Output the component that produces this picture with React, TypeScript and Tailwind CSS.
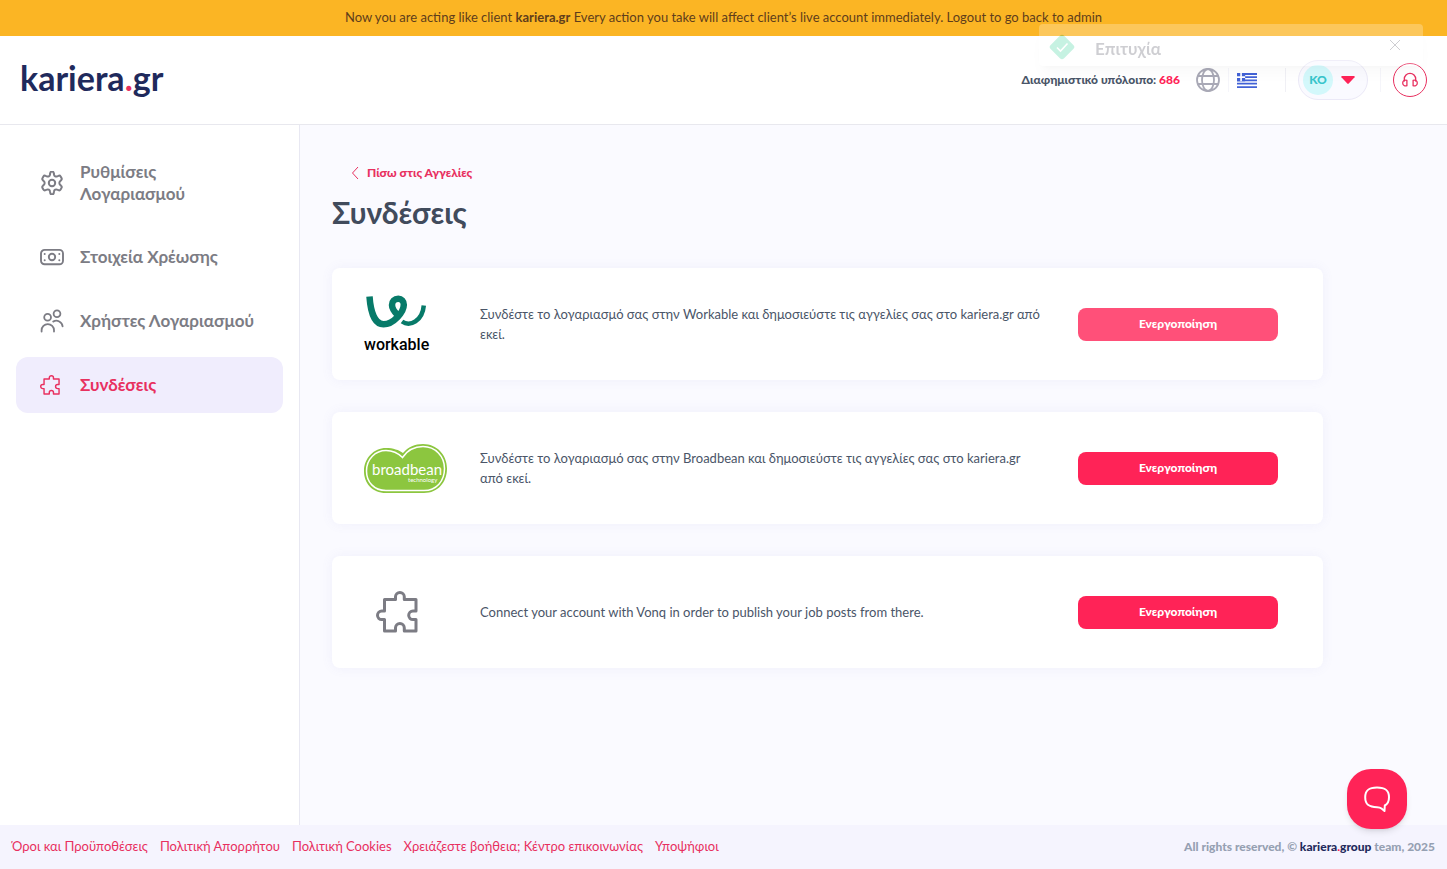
import React from "react";
import clsx from "clsx";

type IconProps = { className?: string };

const GearIcon = ({ className }: IconProps) => (
  <svg
    className={className}
    viewBox="0 0 24 24"
    fill="none"
    stroke="currentColor"
    strokeWidth="2"
    strokeLinejoin="round"
  >
    <path d="M10.200 2.400a1.800 1.800 0 0 1 3.600 0l.2 1.200a2.200 2.200 0 0 0 3.200 1.700l1.200-.5a1.700 1.700 0 0 1 2.200.7l.9 1.600a1.700 1.700 0 0 1-.4 2.100l-.8.8a2.600 2.600 0 0 0 0 4l.8.8a1.700 1.700 0 0 1 .4 2.100l-.9 1.600a1.700 1.700 0 0 1-2.200.7l-1.200-.5a2.200 2.200 0 0 0-3.200 1.700l-.2 1.200a1.800 1.800 0 0 1-3.600 0l-.2-1.200a2.200 2.200 0 0 0-3.200-1.700l-1.200.5a1.700 1.700 0 0 1-2.200-.7l-.9-1.600a1.700 1.700 0 0 1 .4-2.100l.8-.8a2.600 2.600 0 0 0 0-4l-.8-.8a1.700 1.700 0 0 1-.4-2.100l.9-1.600a1.700 1.700 0 0 1 2.200-.7l1.200.5a2.200 2.200 0 0 0 3.200-1.700z" />
    <circle cx="12" cy="12" r="3.200" />
  </svg>
);

const BanknoteIcon = ({ className }: IconProps) => (
  <svg
    className={className}
    viewBox="0 0 24 24"
    fill="none"
    stroke="currentColor"
    strokeWidth="1.900"
  >
    <rect x="1" y="4.900" width="22" height="14.400" rx="3.600" />
    <circle cx="12" cy="12" r="3.200" />
    <g fill="currentColor" stroke="none">
      <circle cx="4.700" cy="9" r="1" />
      <circle cx="4.700" cy="15.200" r="1" />
      <circle cx="19.300" cy="9" r="1" />
      <circle cx="19.300" cy="15.200" r="1" />
    </g>
  </svg>
);

const UsersIcon = ({ className }: IconProps) => (
  <svg
    className={className}
    viewBox="0 0 24 24"
    fill="none"
    stroke="currentColor"
    strokeWidth="1.800"
    strokeLinecap="round"
  >
    <circle cx="7.600" cy="8.200" r="3.400" />
    <circle cx="17" cy="4.800" r="3.400" />
    <path d="M1.600 22.500v-1.200a6.200 6.200 0 0 1 12.400 0v1.200" />
    <path d="M13.200 12.600a6.300 6.300 0 0 1 9.400 4.800" />
  </svg>
);

const PuzzleIcon = ({ className }: IconProps) => (
  <svg
    className={className}
    viewBox="0 0 42 42"
    fill="none"
    stroke="currentColor"
    strokeWidth="3"
    strokeLinejoin="round"
  >
    <path d="M8.500 8.500H19.500V5.800a4.400 4.300 0 0 1 8.800 0V8.500H40V20h-3a4.300 4.300 0 0 0 0 8.600h3V40H28.300v-3a4.400 4.400 0 0 0-8.800 0v3h-11V28.600H5.800a4.300 4.300 0 0 1 0-8.600h2.700z" />
  </svg>
);

const GlobeIcon = ({ className }: IconProps) => (
  <svg
    className={className}
    viewBox="0 0 24 24"
    fill="none"
    stroke="currentColor"
    strokeWidth="1.800"
  >
    <circle cx="12" cy="12" r="11" />
    <ellipse cx="12" cy="12" rx="6" ry="11" />
    <path d="M2 8h20M2 16h20" />
  </svg>
);

const GreekFlag = ({ className }: IconProps) => (
  <svg className={className} viewBox="0 0 27 20">
    <rect width="27" height="20" fill="#fff" />
    <g fill="#4262d6">
      <path d="M0 0h27v2.700H0zM0 4.400h27v2.300H0zM0 8.800h27v2.300H0zM0 13.200h27v2.300H0zM0 17.600h27V20H0z" />
      <rect width="11" height="11.100" />
    </g>
    <path d="M4.400 0h2.200v11.100H4.400zM0 4.400h11v2.300H0z" fill="#fff" />
  </svg>
);

const HeadsetIcon = ({ className }: IconProps) => (
  <svg
    className={className}
    viewBox="0 0 16 16"
    fill="none"
    stroke="currentColor"
    strokeWidth="1.300"
    strokeLinecap="round"
    strokeLinejoin="round"
  >
    <path d="M2.300 9V7a5.700 5.700 0 0 1 11.400 0v2" />
    <path d="M4.900 8.300v5.400c-2 .7-4.200-.4-4.200-2.700s2.200-3.400 4.200-2.700zM11.100 8.300v5.400c2 .7 4.200-.4 4.200-2.700s-2.200-3.400-4.200-2.700z" />
  </svg>
);

const WorkableLogo = () => (
  <div className="w-[65px] pt-0.5">
    <svg viewBox="0 0 65 38" fill="none" stroke="#077a69" className="h-[38px]">
      <path
        d="M5.500 2.500C6.500 17 10.500 30.300 19.500 30.300C29.500 30.300 39.800 18 39.800 10.800C39.800 7 37.500 4.800 34.300 4.800C30.500 4.800 28 7.500 28 11C28 15 30.500 18 34 21.500"
        strokeWidth="6.500"
      />
      <path d="M38 27.500C46 33 58.500 27 59.800 11.500" strokeWidth="4.500" />
    </svg>
    <span className="mt-0.5 block font-['Roboto',sans-serif] text-[16px] leading-[22px] font-medium text-black">
      workable
    </span>
  </div>
);

const BroadbeanLogo = () => (
  <svg viewBox="0 0 83 49" className="h-[49px] w-[83px]">
    <path
      d="M22 49C8 49 0 39 0 27C0 14 10 4 22 4C29 4 35 6 39 9C44 3 51 0 59 0C73 0 83 11 83 24.500C83 38 74 49 60 49Z"
      fill="#8cc63f"
    />
    <path
      d="M22 46.500C10 46.500 2.500 38 2.500 27C2.500 15 11.500 6.500 22 6.500C29 6.500 34 9 38.500 13.500C43.500 6 51 2.500 59 2.500C71.500 2.500 80.500 12.500 80.500 24.500C80.500 37 72.500 46.500 60 46.500Z"
      fill="none"
      stroke="#fff"
      strokeWidth="1.500"
    />
    <text x="8" y="31" fontSize="15" fill="#fff">
      broadbean
    </text>
    <text x="44" y="38" fontSize="6" fill="#fff">
      technology
    </text>
  </svg>
);

const menuItems = [
  { label: "Ρυθμίσεις Λογαριασμού", Icon: GearIcon, iconClass: "size-6" },
  { label: "Στοιχεία Χρέωσης", Icon: BanknoteIcon, iconClass: "size-6" },
  { label: "Χρήστες Λογαριασμού", Icon: UsersIcon, iconClass: "size-6" },
  { label: "Συνδέσεις", Icon: PuzzleIcon, iconClass: "size-5", active: true },
];

const connections = [
  {
    id: "workable",
    logo: <WorkableLogo />,
    text: "Συνδέστε το λογαριασμό σας στην Workable και δημοσιεύστε τις αγγελίες σας στο kariera.gr από εκεί.",
    pending: true,
  },
  {
    id: "broadbean",
    logo: <BroadbeanLogo />,
    text: "Συνδέστε το λογαριασμό σας στην Broadbean και δημοσιεύστε τις αγγελίες σας στο kariera.gr από εκεί.",
  },
  {
    id: "vonq",
    logo: <PuzzleIcon className="ml-3 size-[42px] text-[#7c7c84]" />,
    text: "Connect your account with Vonq in order to publish your job posts from there.",
  },
];

const footerLinks = [
  "Όροι και Προϋποθέσεις",
  "Πολιτική Απορρήτου",
  "Πολιτική Cookies",
  "Χρειάζεστε βοήθεια; Κέντρο επικοινωνίας",
  "Υποψήφιοι",
];

const Header = () => (
  <header className="flex h-[89px] items-center justify-between border-b border-[#e8e8ee] bg-white px-5">
    <a
      href="#"
      className="pb-1 text-[34px] leading-10 font-bold text-[#1f2a5c]"
    >
      kariera<span className="text-[#e8305f]">.</span>gr
    </a>
    <div className="flex items-center">
      <p className="text-[12px] font-black text-[#4a5568]">
        Διαφημιστικό υπόλοιπο: <span className="text-[#ff2357]">686</span>
      </p>
      <button aria-label="Γλώσσα" className="ml-4">
        <GlobeIcon className="size-6 text-[#a9a9b6]" />
      </button>
      <span className="ml-2 h-6 w-px bg-[#f5f5fa]" />
      <GreekFlag className="ml-2 h-[15px] w-5" />
      <span className="ml-7 h-6 w-px bg-[#f0f0f5]" />
      <button className="ml-3 flex h-10 w-[70px] items-center rounded-full border border-[#ebe9f7] bg-[#fafaff] pl-1">
        <span className="flex size-[30px] items-center justify-center rounded-full bg-[#d3f8fb] text-[12px] font-black text-[#38c5cb]">
          KO
        </span>
        <svg viewBox="0 0 14 8" className="ml-2 h-2 w-3.5" fill="#ff2357">
          <path d="M1 0h12a.8.8 0 0 1 .6 1.300L7.700 7.600a1 1 0 0 1-1.400 0L.4 1.300A.8.8 0 0 1 1 0z" />
        </svg>
      </button>
      <span className="ml-3 h-6 w-px bg-[#f5f5fa]" />
      <button
        aria-label="Υποστήριξη"
        className="ml-3 flex size-[34px] items-center justify-center rounded-full border border-[#e8305f] text-[#e8305f]"
      >
        <HeadsetIcon className="size-4" />
      </button>
    </div>
  </header>
);

const Toast = () => (
  <div
    role="status"
    className="fixed top-6 right-6 flex h-[42px] w-96 items-center rounded bg-white pr-5 opacity-25 shadow-lg"
  >
    <svg viewBox="0 0 26 26" className="mt-1 ml-2.5 size-[26px]">
      <rect
        x="3.500"
        y="3.500"
        width="19"
        height="19"
        rx="3"
        fill="#1fc98b"
        transform="rotate(45 13 13)"
      />
      <path d="M8 13.500l3.500 3.500 7-7.500" fill="none" stroke="#fff" strokeWidth="1.600" />
    </svg>
    <p className="ml-5 flex-1 pt-2 text-[17px] font-bold text-[#3c3c4c]">
      Επιτυχία
    </p>
    <button aria-label="Κλείσιμο">
      <svg viewBox="0 0 12 12" className="mr-0.5 size-3" stroke="#3c3c4c">
        <path d="M1 1l10 10M11 1L1 11" />
      </svg>
    </button>
  </div>
);

const App = () => {
  return (
    <div className="flex min-h-screen flex-col bg-[#fafaff] font-['Lato',sans-serif] text-[#4a5568]">
      <div className="flex h-9 items-center justify-center bg-[#fbb524] text-[13px] text-[#5f3d1b]">
        <p>
          Now you are acting like client <b>kariera.gr</b> Every action you take
          will affect client’s live account immediately. Logout to go back to
          admin
        </p>
      </div>
      <Header />

      <div className="flex flex-1">
        <aside className="w-[300px] shrink-0 border-r border-[#e8e8f2] bg-white px-4 pt-5">
          <nav className="flex flex-col gap-2">
            {menuItems.map(({ label, Icon, iconClass, active }) => (
              <a
                key={label}
                href="#"
                className={clsx(
                  "flex min-h-14 items-center gap-4 rounded-xl px-6 py-4 text-[17px] leading-[22px] font-bold",
                  active ? "bg-[#f0edfd] text-[#e8305f]" : "text-[#7c7c84]"
                )}
              >
                <span className="w-6 shrink-0">
                  <Icon className={iconClass} />
                </span>
                {label}
              </a>
            ))}
          </nav>
        </aside>

        <main className="flex-1 pt-9 pr-31 pl-8">
          <a
            href="#"
            className="ml-[19px] inline-flex h-6 items-center gap-2 text-[12px] font-black text-[#e8305f]"
          >
            <svg
              viewBox="0 0 8 14"
              className="h-3.5 w-2"
              fill="none"
              stroke="currentColor"
            >
              <path d="M7 1L1.500 7L7 13" />
            </svg>
            Πίσω στις Αγγελίες
          </a>
          <h1 className="mt-2 text-[30px] leading-9 font-bold text-[#414b5c]">
            Συνδέσεις
          </h1>
          <ul className="mt-[38px] flex flex-col gap-8">
            {connections.map(({ id, logo, text, pending }) => (
              <li
                key={id}
                className="flex h-28 items-center rounded-lg bg-white pr-[45px] pl-8 shadow-[0_0_12px_rgba(120,110,200,0.08)]"
              >
                <div className="w-[116px] shrink-0">{logo}</div>
                <p className="flex-1 text-[13px] leading-5">{text}</p>
                <button
                  className={clsx(
                    "ml-8 h-[33px] w-[200px] shrink-0 rounded-lg text-[12px] font-black text-white",
                    pending ? "bg-[#ff5079]" : "bg-[#ff2357]"
                  )}
                >
                  Ενεργοποίηση
                </button>
              </li>
            ))}
          </ul>
        </main>
      </div>

      <footer className="flex h-11 items-center justify-between bg-[#f5f4fe] px-3">
        <nav className="flex gap-3 text-[13px] text-[#e8305f]">
          {footerLinks.map((link) => (
            <a key={link} href="#">
              {link}
            </a>
          ))}
        </nav>
        <p className="text-[12px] font-black text-[#95a0b2]">
          All rights reserved, ©{" "}
          <span className="text-[#1f2a5c]">
            kariera<span className="text-[#ff2357]">.</span>group
          </span>{" "}
          team, 2025
        </p>
      </footer>

      <Toast />
      <button
        aria-label="Συνομιλία"
        className="fixed right-10 bottom-10 flex size-[60px] items-center justify-center rounded-3xl bg-[#ff2357] shadow-md"
      >
        <svg
          viewBox="0 0 28 28"
          className="size-7"
          fill="none"
          stroke="#fff"
          strokeWidth="2"
          strokeLinejoin="round"
        >
          <path d="M14 2.500C6.500 2.500 2.200 4.500 2.200 12.300S6.500 22.200 14 22.200c1.800 0 3.200.2 4.500 1.300l3 2.500.3-5.500c3-1.500 4.200-4.300 4.200-8.200C26 4.500 21.500 2.500 14 2.500z" />
        </svg>
      </button>
    </div>
  );
};

export default App;
